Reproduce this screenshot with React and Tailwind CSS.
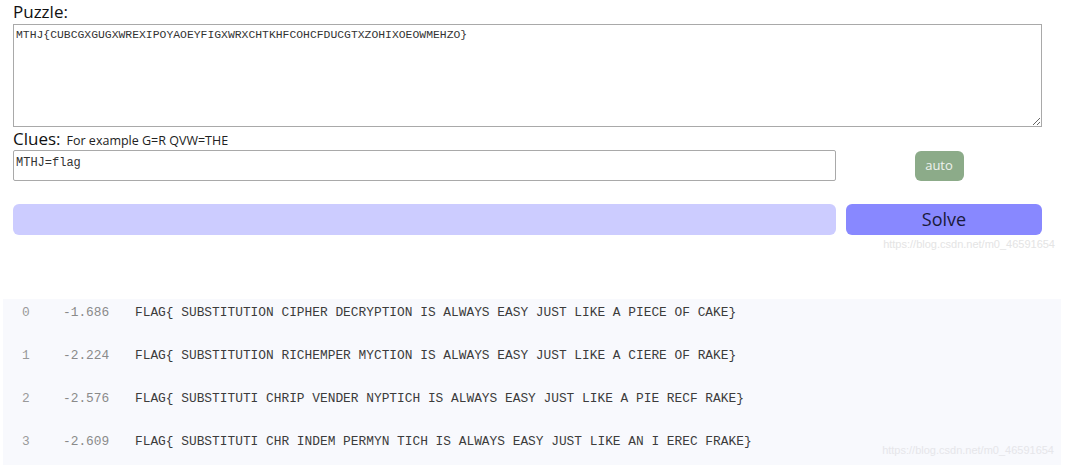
import React from 'react';

const PUZZLE = "MTHJ{CUBCGXGUGXWREXIPOYAOEYFIGXWRXCHTKHFCOHCFDUCGTXZOHIXOEOWMEHZO}";

const RESULTS = [
    { idx: 0, score: "-1.686", text: "FLAG{ SUBSTITUTION CIPHER DECRYPTION IS ALWAYS EASY JUST LIKE A PIECE OF CAKE}" },
    { idx: 1, score: "-2.224", text: "FLAG{ SUBSTITUTION RICHEMPER MYCTION IS ALWAYS EASY JUST LIKE A CIERE OF RAKE}" },
    { idx: 2, score: "-2.576", text: "FLAG{ SUBSTITUTI CHRIP VENDER NYPTICH IS ALWAYS EASY JUST LIKE A PIE RECF RAKE}" },
    { idx: 3, score: "-2.609", text: "FLAG{ SUBSTITUTI CHR INDEM PERMYN TICH IS ALWAYS EASY JUST LIKE AN I EREC FRAKE}" },
];

const mono = "font-['Liberation_Mono',monospace]";

export default function App() {
    return (
        <div className="w-[1069px] h-[472px] bg-white font-['Open_Sans',sans-serif] text-[#222] overflow-hidden">
            <div className="pl-[13px] pr-[27px] pt-[1px]">
                {/* Puzzle */}
                <div className="text-[17px] leading-[22px] text-[#111]">Puzzle:</div>
                <textarea
                    readOnly
                    defaultValue={PUZZLE}
                    className={`block w-full h-[103px] mt-[1px] border border-[#a9a9a9] px-[2px] py-[3px] text-[11.4px] leading-[14px] text-[#333] outline-none ${mono}`}
                />

                {/* Clues */}
                <div className="flex items-baseline gap-[6px] mt-[-1px] h-[24px]">
                    <span className="text-[17px] text-[#111]">Clues:</span>
                    <span className="text-[12.5px] text-[#222]">For example G=R QVW=THE</span>
                </div>
                <div className="flex items-center">
                    <input
                        readOnly
                        defaultValue="MTHJ=flag"
                        className={`w-[823px] h-[31px] border border-[#a9a9a9] rounded-[2px] px-[2px] pb-[6px] text-[12px] text-[#333] outline-none ${mono}`}
                    />
                    <div className="flex-1 flex justify-center">
                        <button className="w-[49px] h-[30px] rounded-[6px] bg-[#8cab89] text-[#eef2ee] text-[13px]">auto</button>
                    </div>
                </div>

                {/* Progress + Solve */}
                <div className="flex gap-[10px] mt-[23px]">
                    <div className="w-[823px] h-[31px] rounded-[6px] bg-[#ccccff]" />
                    <button className="flex-1 h-[31px] rounded-[6px] bg-[#8888ff] text-[18px] text-[#1a1a3a] leading-[31px]">Solve</button>
                </div>
            </div>
            <div className="flex justify-end pr-[14px] h-[18px] mt-[1px]">
                <span className="text-[11px] text-[#e4e4e4] font-['Liberation_Sans',sans-serif]">https://blog.csdn.net/m0_46591654</span>
            </div>

            {/* Results */}
            <div className={`relative ml-[3px] mt-[45px] w-[1058px] h-[166px] bg-[#f8f9fd] pt-[6px] ${mono} text-[12.85px]`}>
                {RESULTS.map((r) => (
                    <div key={r.idx} className="flex h-[43px] leading-[16px]">
                        <span className="w-[60px] pl-[19px] text-[#9a9a9a]">{r.idx}</span>
                        <span className="w-[72px] text-[#8a8a8a]">{r.score}</span>
                        <span className="text-[#3c3c3c] whitespace-pre">{r.text}</span>
                    </div>
                ))}
                <span className="absolute right-[7px] bottom-[7px] text-[11px] text-[#e6e6ea] font-['Liberation_Sans',sans-serif]">https://blog.csdn.net/m0_46591654</span>
            </div>
        </div>
    );
}
